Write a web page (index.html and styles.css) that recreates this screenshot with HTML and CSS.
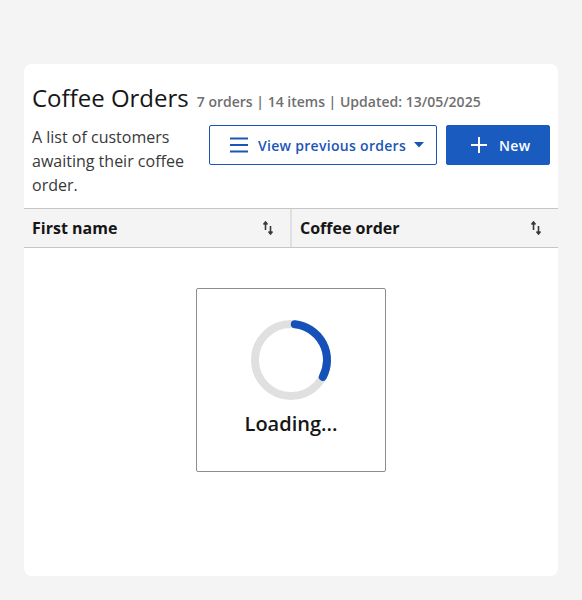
FILE: index.html
```html
<!DOCTYPE html>
<html>
<head>
<meta charset="utf-8">
<link rel="stylesheet" href="styles.css">
</head>
<body>
<div class="card">
  <div class="head">
    <div class="title-row">
      <h1 class="title">Coffee Orders</h1>
      <span class="meta">7 orders | 14 items | Updated: 13/05/2025</span>
    </div>
    <div class="desc-row">
      <p class="desc">A list of customers awaiting their coffee order.</p>
      <div class="actions">
        <button class="btn btn-outline">
          <svg class="ico" width="20" height="20" viewBox="0 0 20 20"><path d="M1 3.5h18M1 10h18M1 16.5h18" stroke="currentColor" stroke-width="2" fill="none"/></svg>
          <span>View previous orders</span>
          <svg class="caret" width="10" height="6" viewBox="0 0 10 6"><path d="M0 0h10L5 5.5z" fill="currentColor"/></svg>
        </button>
        <button class="btn btn-primary">
          <svg class="ico" width="16" height="16" viewBox="0 0 16 16"><path d="M8 0v16M0 8h16" stroke="currentColor" stroke-width="2" fill="none"/></svg>
          <span>New</span>
        </button>
      </div>
    </div>
  </div>
  <div class="thead">
    <div class="th">
      <span>First name</span>
      <svg class="sort" width="12" height="14" viewBox="0 0 12 14"><path d="M3.5 1v8M1.5 3.5L3.5 1l2 2.5M8.5 5v8M6.5 10.5l2 2.5 2-2.5" stroke="currentColor" stroke-width="1.6" fill="none"/></svg>
    </div>
    <div class="th th-right">
      <span>Coffee order</span>
      <svg class="sort" width="12" height="14" viewBox="0 0 12 14"><path d="M3.5 1v8M1.5 3.5L3.5 1l2 2.5M8.5 5v8M6.5 10.5l2 2.5 2-2.5" stroke="currentColor" stroke-width="1.6" fill="none"/></svg>
    </div>
  </div>
  <div class="body">
    <div class="loading">
      <svg class="spinner" width="82" height="82" viewBox="0 0 82 82">
        <circle cx="41" cy="41" r="36" stroke="#e0e0e0" stroke-width="8" fill="none"/>
        <path d="M44.8 5.2 A36 36 0 0 1 72.8 57.9" stroke="#1551b8" stroke-width="8" fill="none" stroke-linecap="round"/>
      </svg>
      <div class="loading-text">Loading...</div>
    </div>
  </div>
</div>
</body>
</html>
```

FILE: styles.css
```css
html, body {
  margin: 0;
  padding: 0;
}
body {
  background: #f4f4f4;
  font-family: "Open Sans", "Liberation Sans", sans-serif;
  color: #161616;
  padding: 64px 24px 24px;
}
.card {
  background: #ffffff;
  border-radius: 8px;
  height: 512px;
  overflow: hidden;
  display: flex;
  flex-direction: column;
}
.head {
  padding: 18px 8px 11px;
}
.title-row {
  display: flex;
  align-items: baseline;
  gap: 8px;
}
.title {
  margin: 0;
  font-size: 24px;
  font-weight: 400;
  line-height: 32px;
  color: #161616;
}
.meta {
  font-size: 14px;
  font-weight: 600;
  color: #6f6f6f;
}
.desc-row {
  display: flex;
  justify-content: space-between;
  align-items: flex-start;
  margin-top: 11px;
}
.desc {
  margin: 0;
  width: 168px;
  font-size: 16px;
  line-height: 24px;
  color: #393939;
}
.actions {
  display: flex;
  gap: 9px;
}
.btn {
  height: 40px;
  border-radius: 2px;
  font-family: "Open Sans", "Liberation Sans", sans-serif;
  font-size: 14px;
  letter-spacing: 0.3px;
  font-weight: 600;
  display: flex;
  align-items: center;
  cursor: pointer;
}
.btn-outline {
  width: 228px;
  background: #fff;
  border: 1px solid #1a56b8;
  color: #1a56b8;
  padding: 0 0 0 19px;
}
.btn-outline .ico {
  margin-right: 9px;
}
.btn-outline .caret {
  margin-left: 8px;
}
.btn-primary {
  width: 104px;
  background: #1a5bbf;
  border: 1px solid #1a5bbf;
  color: #fff;
  padding: 0 0 0 24px;
}
.btn-primary .ico {
  margin-right: 12px;
}
.thead {
  display: flex;
  height: 38px;
  background: #f4f4f4;
  border-top: 1px solid #c6c6c6;
  border-bottom: 1px solid #c6c6c6;
}
.th {
  flex: 1;
  display: flex;
  align-items: center;
  justify-content: space-between;
  padding: 0 16px 0 8px;
  font-size: 16px;
  font-weight: 700;
  color: #161616;
}
.th-right {
  border-left: 2px solid #e0e0e0;
}
.sort {
  color: #393939;
}
.body {
  flex: 1;
  display: flex;
  justify-content: center;
  padding-top: 40px;
}
.loading {
  width: 188px;
  border: 1px solid #8d8d8d;
  border-radius: 2px;
  display: flex;
  flex-direction: column;
  align-items: center;
  padding-top: 30px;
  box-sizing: content-box;
  height: 152px;
}
.loading-text {
  margin-top: 9px;
  font-size: 20px;
  font-weight: 600;
  line-height: 28px;
}
```
